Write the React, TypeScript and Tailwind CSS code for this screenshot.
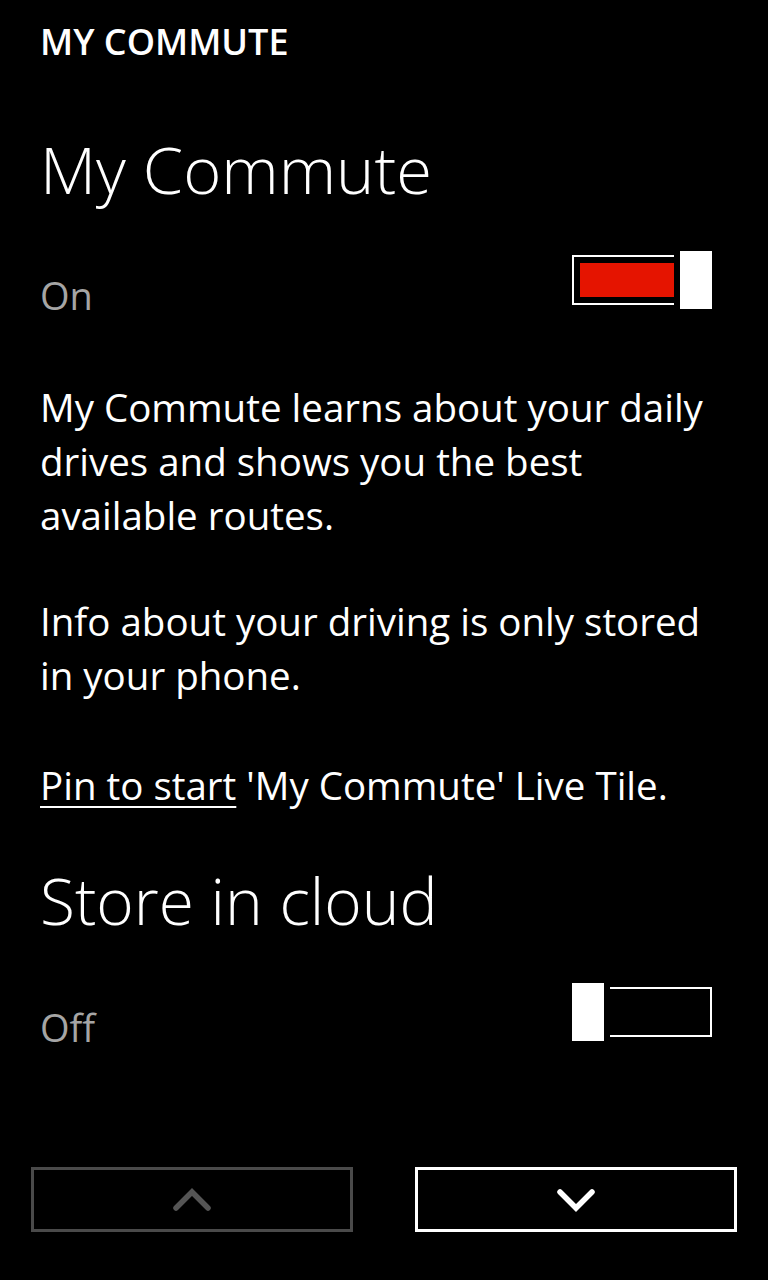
import React from 'react';

const Toggle: React.FC<{ on: boolean }> = ({ on }) => (
  <div className="relative flex h-[58px] w-[140px] items-center">
    <div className="flex h-[50px] w-full border-2 border-white p-[6px]">
      {on && <div className="h-full flex-1 bg-[#e51400]" />}
    </div>
    <div
      className={
        on
          ? 'absolute right-0 top-0 h-[58px] w-8 bg-white shadow-[0_0_0_6px_#000]'
          : 'absolute left-0 top-0 h-[58px] w-8 bg-white shadow-[0_0_0_6px_#000]'
      }
    />
  </div>
);

const Chevron: React.FC<{ up?: boolean; color: string }> = ({ up, color }) => (
  <svg width="40" height="24" viewBox="0 0 40 24">
    <polyline
      points={up ? '4,20 20,4 36,20' : '4,4 20,20 36,4'}
      fill="none"
      stroke={color}
      strokeWidth="5.5"
      strokeLinecap="round"
      strokeLinejoin="miter"
    />
  </svg>
);

export default function App() {
  return (
    <div className="flex min-h-[1280px] w-[768px] flex-col bg-black font-['Open_Sans',sans-serif] text-white">
      <div className="pl-10 pt-5 text-[36px] font-semibold leading-[44px]">MY COMMUTE</div>

      <div className="pl-10 pr-14">
        <h1 className="mt-[69px] text-[65px] font-light leading-[72px]">My Commute</h1>
        <div className="mt-[46px] flex items-start justify-between">
          <span className="mt-5 text-[38px] leading-[48px] text-[#a5a5a5]">On</span>
          <Toggle on />
        </div>

        <p className="mt-[61px] text-[38.5px] leading-[54px]">
          My Commute learns about your daily drives and shows you the best available routes.
        </p>
        <p className="mt-[52px] text-[38.5px] leading-[54px]">
          Info about your driving is only stored in your phone.
        </p>
        <p className="mt-[56px] text-[38.5px] leading-[54px]">
          <span className="underline decoration-2 underline-offset-[6px]">Pin to start</span> 'My Commute' Live Tile.
        </p>

        <h2 className="mt-[53px] text-[64px] font-light leading-[72px]">Store in cloud</h2>
        <div className="mt-[46px] flex items-start justify-between">
          <span className="mt-5 text-[38px] leading-[48px] text-[#a5a5a5]">Off</span>
          <Toggle on={false} />
        </div>
      </div>

      <div className="mt-auto flex justify-between px-[31px] pb-12">
        <button className="flex h-[65px] w-[322px] items-center justify-center border-[3px] border-[#4a4a4a]">
          <Chevron up color="#555555" />
        </button>
        <button className="flex h-[65px] w-[322px] items-center justify-center border-[3px] border-white">
          <Chevron color="#ffffff" />
        </button>
      </div>
    </div>
  );
}
